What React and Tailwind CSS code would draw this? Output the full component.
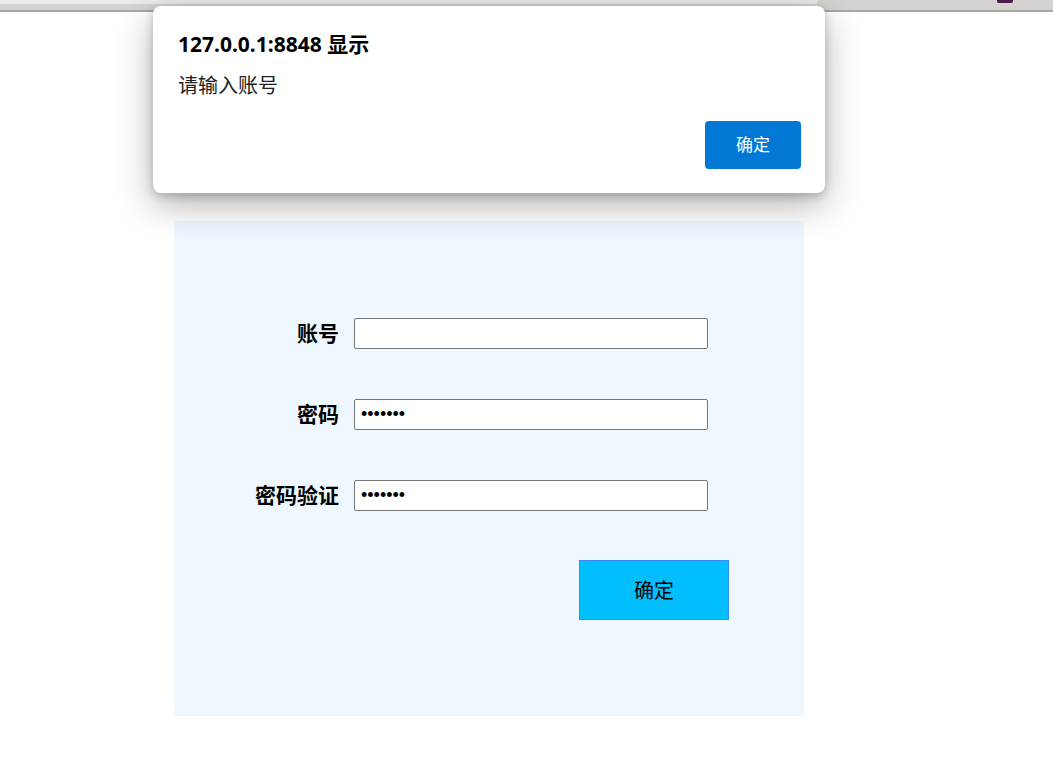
import React from "react";

export default function App() {
  const cjk = { fontFamily: '"Noto Sans", "Noto Sans CJK SC", sans-serif' };
  return (
    <div className="relative w-[1053px] h-[781px] bg-white overflow-hidden" style={cjk}>
      {/* browser chrome remnant */}
      <div className="relative h-[12px] bg-[#d6d2d0] border-b-2 border-[#aaa6a5]">
        <div className="h-[4px] w-[818px] bg-[#edebe9] rounded-br-[4px]"></div>
        <div className="absolute left-[997px] top-0 w-[16px] h-[3px] bg-[#4b1c4b] rounded-b-[2px]"></div>
      </div>

      {/* page form */}
      <div className="pl-[174px] pt-[209px]">
        <div className="w-[630px] h-[495px] bg-[#f0f8ff] pt-[97px]">
          <div className="grid grid-cols-[165px_354px] gap-x-[15px] gap-y-[50px] items-center">
            <label className="text-right text-[21px] font-bold text-black leading-none">账号</label>
            <input type="text" className="h-[31px] bg-white border border-[#767676] rounded-[2px] px-[6px] outline-none" />
            <label className="text-right text-[21px] font-bold text-black leading-none">密码</label>
            <input type="password" readOnly value="1234567" className="h-[31px] bg-white border border-[#767676] rounded-[2px] px-[6px] text-[18px] outline-none" style={{ fontFamily: '"Liberation Sans", sans-serif' }} />
            <label className="text-right text-[21px] font-bold text-black leading-none">密码验证</label>
            <input type="password" readOnly value="1234567" className="h-[31px] bg-white border border-[#767676] rounded-[2px] px-[6px] text-[18px] outline-none" style={{ fontFamily: '"Liberation Sans", sans-serif' }} />
          </div>
          <button className="ml-[405px] mt-[49px] w-[150px] h-[60px] bg-[#00bfff] border border-[#3d86f5] text-[20px] text-black pt-[2px]">
            确定
          </button>
        </div>
      </div>

      {/* alert dialog */}
      <div className="absolute left-[153px] top-[6px] w-[672px] h-[187px] bg-white rounded-[8px] shadow-[0_12px_36px_rgba(0,0,0,0.3),0_3px_10px_rgba(0,0,0,0.2)] pl-[25px] pr-[24px] pt-[23px] flex flex-col">
        <div className="text-[21px] font-bold text-black leading-[30px]">127.0.0.1:8848 显示</div>
        <div className="mt-[15px] text-[20px] text-[#202020] leading-[24px]">请输入账号</div>
        <div className="mt-auto mb-[24px] flex justify-end">
          <button className="w-[96px] h-[48px] bg-[#0078d4] rounded-[4px] text-white text-[17px]">确定</button>
        </div>
      </div>
    </div>
  );
}
